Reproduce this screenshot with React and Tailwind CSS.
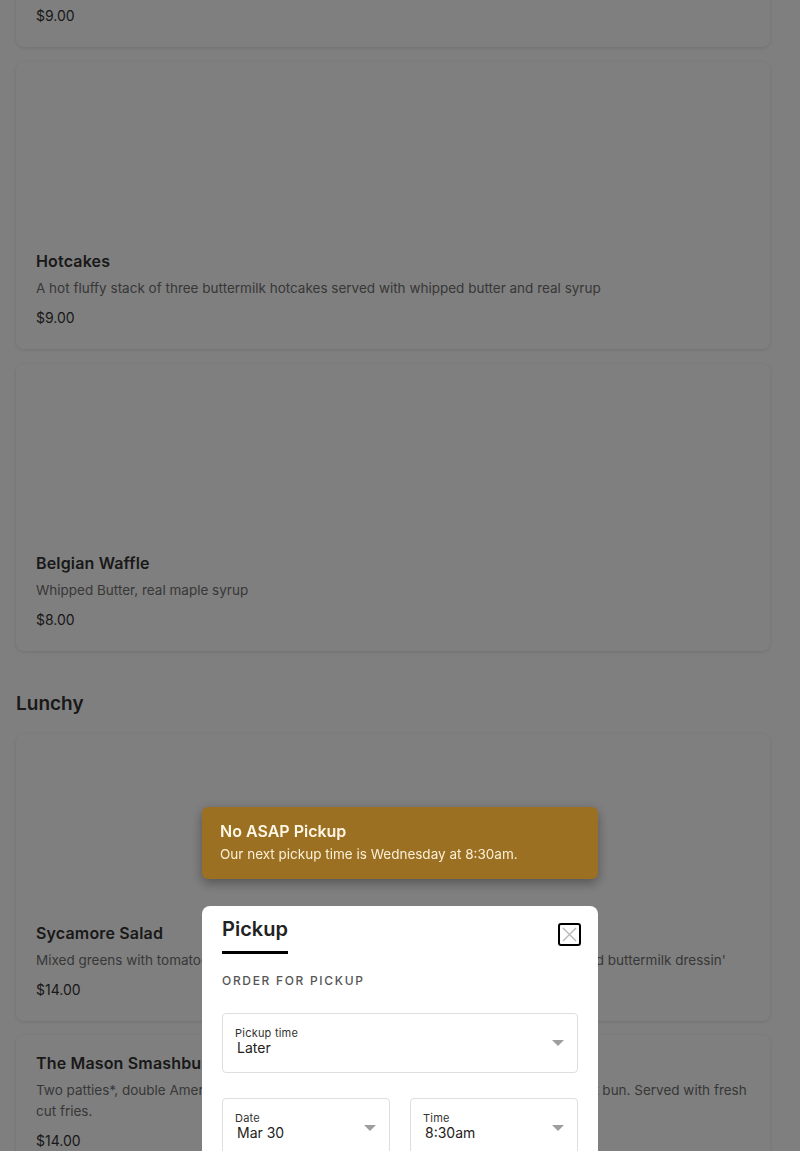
import React from 'react';

const items = [
  { name: 'Buttermilk Biscuits', desc: 'Two house-made biscuits with sausage gravy', price: '$9.00', image: true },
  { name: 'Hotcakes', desc: 'A hot fluffy stack of three buttermilk hotcakes served with whipped butter and real syrup', price: '$9.00', image: true },
  { name: 'Belgian Waffle', desc: 'Whipped Butter, real maple syrup', price: '$8.00', image: true },
];

const lunch = [
  { name: 'Sycamore Salad', desc: "Mixed greens with tomatoes, cucumbers, radish, croutons, shaved carrots, red onion and buttermilk dressin'", price: '$14.00', image: true },
  { name: 'The Mason Smashburger', desc: 'Two patties*, double American cheese, grilled onions, pickles and house sauce on a soft bun. Served with fresh cut fries.', price: '$14.00', image: false },
];

const Card = ({ item, first }) => (
  <div className={`bg-white rounded-lg shadow-[0_1px_4px_rgba(0,0,0,0.12)] ${first ? 'mt-[-240px]' : ''}`}>
    {item.image && <div className="h-[171px]" />}
    <div className="px-5 pt-4 pb-[21px]">
      <div className="text-base leading-6 font-semibold text-[#333] tracking-[0.01em]">{item.name}</div>
      <div className="mt-[5px] text-[13.5px] leading-[21px] text-[#707070]">{item.desc}</div>
      <div className="mt-[9px] text-sm leading-5 text-[#333]">{item.price}</div>
    </div>
  </div>
);

const Caret = () => (
  <svg width="12" height="6" viewBox="0 0 12 6" className="shrink-0">
    <path d="M0 0 L12 0 L6 6 Z" fill="#9e9e9e" />
  </svg>
);

const SelectBox = ({ label, value, className = '' }) => (
  <div className={`border border-[#dedede] rounded h-[60px] flex items-center justify-between pl-3 pr-[13px] ${className}`}>
    <div className="flex flex-col pb-[5px]">
      <span className="text-[11px] leading-[13px] text-[#333] tracking-[0.02em]">{label}</span>
      <span className="text-sm leading-[15px] text-[#222] pl-[2px]">{value}</span>
    </div>
    <Caret />
  </div>
);

export default function App() {
  return (
    <div className="h-[1151px] overflow-hidden bg-white relative" style={{ fontFamily: 'Inter, "Noto Sans", sans-serif' }}>
      <div className="pl-4 pr-[30px]">
        <div className="flex flex-col gap-[15px]">
          {items.map((it, i) => (
            <Card key={it.name} item={it} first={i === 0} />
          ))}
        </div>
        <h2 className="mt-[39px] mb-[16px] text-[19px] leading-7 font-semibold text-[#333]">Lunchy</h2>
        <div className="flex flex-col gap-[14px]">
          {lunch.map((it) => (
            <Card key={it.name} item={it} />
          ))}
        </div>
      </div>

      <div className="fixed inset-0 bg-black/50" />

      <div className="fixed left-[202px] top-[807px] w-[396px] h-[72px] rounded-md bg-[#9b7022] shadow-[0_4px_12px_rgba(0,0,0,0.35)] px-[18px] pt-[13px]">
        <div className="text-base leading-[22px] font-semibold text-[#fff7e6]">No ASAP Pickup</div>
        <div className="text-[13.5px] leading-5 mt-[2px] text-[#fbefd6]">Our next pickup time is Wednesday at 8:30am.</div>
      </div>

      <div className="fixed left-[202px] top-[906px] w-[396px] h-[300px] rounded-t-lg bg-white px-5 pt-[9px]">
        <div className="flex items-start justify-between">
          <div>
            <div className="text-xl leading-7 font-semibold text-[#222]">Pickup</div>
            <div className="h-[3px] bg-black mt-[8px]" />
          </div>
          <button className="mt-[8px] mr-[-3px] w-[23px] h-[23px] border-2 border-black rounded-[3px] flex items-center justify-center">
            <svg width="15" height="15" viewBox="0 0 15 15">
              <path d="M1 1 L14 14 M14 1 L1 14" stroke="#bdbdbd" strokeWidth="1.5" />
            </svg>
          </button>
        </div>
        <div className="mt-[19px] text-[12px] leading-4 tracking-[0.14em] text-[#555] font-medium">ORDER FOR PICKUP</div>
        <SelectBox className="mt-[24px]" label="Pickup time" value="Later" />
        <div className="mt-[25px] grid grid-cols-2 gap-5">
          <SelectBox label="Date" value="Mar 30" />
          <SelectBox label="Time" value="8:30am" />
        </div>
      </div>
    </div>
  );
}
